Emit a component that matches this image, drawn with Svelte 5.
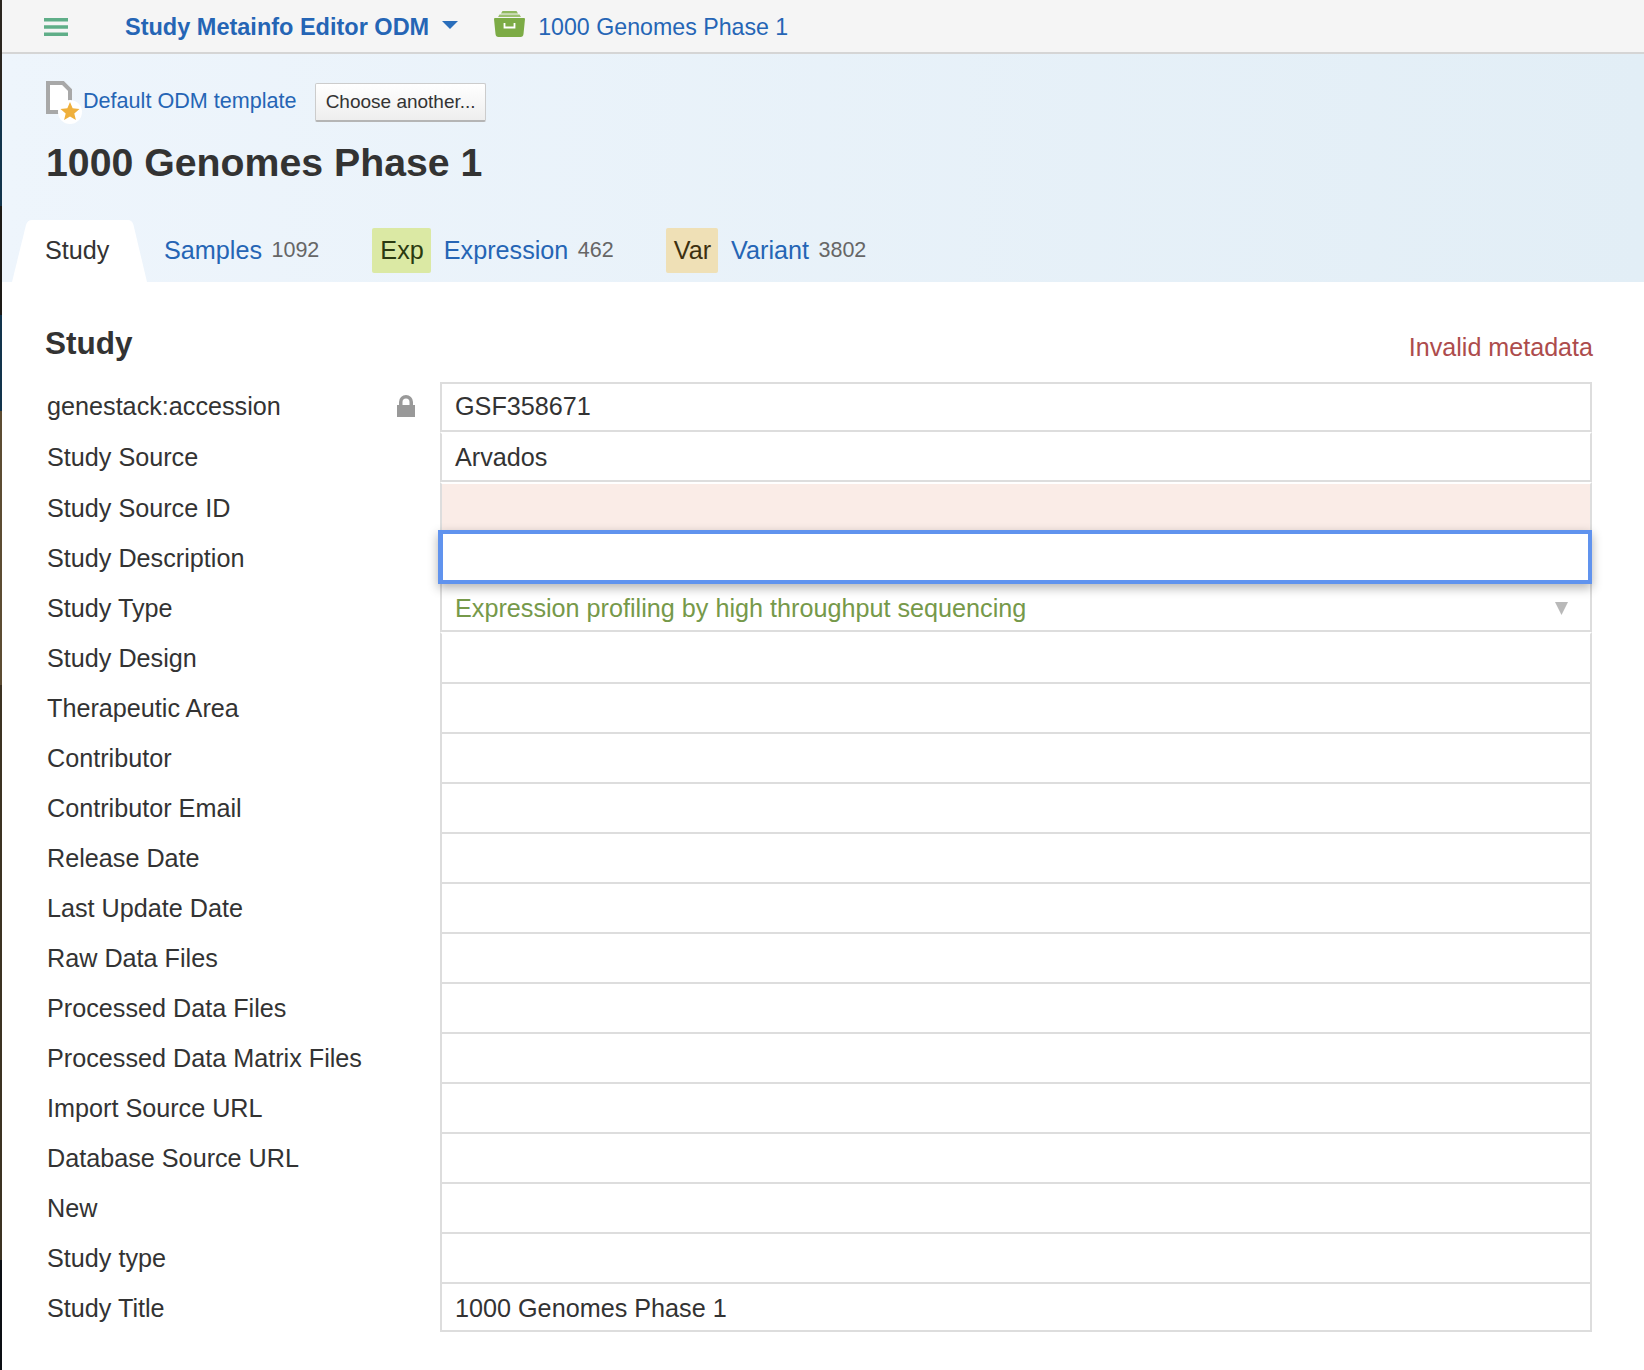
<script lang="ts">
	const fields = [
		{ label: 'genestack:accession', value: 'GSF358671', locked: true },
		{ label: 'Study Source', value: 'Arvados' },
		{ label: 'Study Source ID', value: '', invalid: true },
		{ label: 'Study Description', value: '', focused: true },
		{ label: 'Study Type', value: 'Expression profiling by high throughput sequencing', term: true },
		{ label: 'Study Design', value: '' },
		{ label: 'Therapeutic Area', value: '' },
		{ label: 'Contributor', value: '' },
		{ label: 'Contributor Email', value: '' },
		{ label: 'Release Date', value: '' },
		{ label: 'Last Update Date', value: '' },
		{ label: 'Raw Data Files', value: '' },
		{ label: 'Processed Data Files', value: '' },
		{ label: 'Processed Data Matrix Files', value: '' },
		{ label: 'Import Source URL', value: '' },
		{ label: 'Database Source URL', value: '' },
		{ label: 'New', value: '' },
		{ label: 'Study type', value: '' },
		{ label: 'Study Title', value: '1000 Genomes Phase 1' }
	];
</script>

<div class="page">
	<nav class="topbar">
		<svg class="burger" width="24" height="18" viewBox="0 0 24 18" aria-hidden="true">
			<path d="M0 1.750h24M0 9h24M0 16.250h24" stroke="#5fae88" stroke-width="3.500" />
		</svg>
		<a class="app-name" href="#app">Study Metainfo Editor ODM</a>
		<svg class="caret" width="16" height="8" viewBox="0 0 16 8" aria-hidden="true">
			<path d="M0 0h16L8 8z" fill="#2a6ebb" />
		</svg>
		<svg class="box" width="31" height="26" viewBox="0 0 31 26" aria-hidden="true">
			<path d="M7 2.500 8.500 0h14L24 2.500z" fill="#8fb85f" />
			<path d="M4 6 5.500 3.500h20L27 6z" fill="#9cc070" />
			<path d="M0 8q0-1 1-1h29q1 0 1 1l-1.500 15q-.3 3-3 3h-22q-2.700 0-3-3z" fill="#7cab45" />
			<path d="M10.500 12v4.500h10V12" fill="none" stroke="#fff" stroke-width="1.800" />
		</svg>
		<a class="file-name" href="#app">1000 Genomes Phase 1</a>
	</nav>

	<header class="head">
		<div class="template">
			<svg class="doc" width="36" height="44" viewBox="0 0 36 44" aria-hidden="true">
				<path d="M2 2h15l7 7v22H2z" fill="#fff" stroke="#a8a8a8" stroke-width="4" />
				<circle cx="24" cy="31" r="12" fill="#fff" />
				<path d="M24 21l2.650 6.360 6.850.54-5.200 4.500 1.600 6.700-5.900-3.600-5.900 3.600 1.600-6.700-5.200-4.500 6.850-.54z" fill="#efb03c" />
			</svg>
			<a class="template-link" href="#app">Default ODM template</a>
			<button class="choose" type="button">Choose another...</button>
		</div>
		<h1>1000 Genomes Phase 1</h1>
		<div class="tabs">
			<div class="tab active">Study</div>
			<div class="tab"><a href="#app">Samples</a><span class="count">1092</span></div>
			<div class="tab"><span class="badge exp">Exp</span><a href="#app">Expression</a><span class="count">462</span></div>
			<div class="tab"><span class="badge var">Var</span><a href="#app">Variant</a><span class="count">3802</span></div>
		</div>
	</header>

	<main class="content">
		<div class="section-head">
			<h2>Study</h2>
			<span class="invalid-note">Invalid metadata</span>
		</div>
		<div class="rows">
			{#each fields as field}
				<div class="row">
					<div class="label">
						<span>{field.label}</span>
						{#if field.locked}
							<svg class="lock" width="18" height="22" viewBox="0 0 18 22" aria-hidden="true">
								<path d="M3.750 11V7a5.250 5.250 0 0 1 10.500 0v4" fill="none" stroke="#999" stroke-width="3.500" />
								<path d="M0 10h18v12H0z" fill="#999" />
							</svg>
						{/if}
					</div>
					<div class="cell" class:invalid={field.invalid} class:focused={field.focused} class:term={field.term}>
						{field.value}
						{#if field.term}
							<svg class="arrow" width="13" height="13" viewBox="0 0 13 13" aria-hidden="true">
								<path d="M0 0h13L6.500 13z" fill="#b9b9b9" />
							</svg>
						{/if}
					</div>
				</div>
			{/each}
		</div>
	</main>
</div>

<style>
	:global(body) {
		margin: 0;
		background: #fff;
	}

	.page {
		min-height: 1370px;
		padding-left: 2px;
		/* sliver of desktop showing at the window's left edge */
		background: linear-gradient(
				#2b2620 0 8%,
				#12344c 8% 15%,
				#1d1a16 15% 23%,
				#12344c 23% 30%,
				#5c4c32 30% 50%,
				#3c3222 50% 92%,
				#0c0f14 92%
			)
			no-repeat 0 0 / 2px 100%;
		font-family: 'Liberation Sans', Arial, sans-serif;
		color: #333;
	}

	a {
		color: #2565b5;
		text-decoration: none;
	}

	.topbar {
		display: flex;
		align-items: center;
		height: 54px;
		box-sizing: border-box;
		padding: 2px 0 0 42px;
		background: #f5f5f5;
		border-bottom: 2px solid #d5d5d5;
	}

	.burger {
		margin-right: 57px;
	}

	.app-name {
		font-size: 23.500px;
		font-weight: 700;
	}

	.caret {
		margin: 0 36px 4px 13px;
	}

	.box {
		margin: 0 13px 6px 0;
	}

	.file-name {
		font-size: 23.200px;
	}

	.head {
		height: 228px;
		box-sizing: border-box;
		padding: 28px 0 0 44px;
		background: linear-gradient(90deg, #eef5fc, #e2eef6);
	}

	.template {
		display: flex;
		align-items: center;
		height: 40px;
	}

	.doc {
		margin: 2px 1px 0 0;
	}

	.template-link {
		padding-bottom: 2px;
		font-size: 21.600px;
	}

	.choose {
		height: 39px;
		margin-left: 18px;
		padding: 0 9.500px 0 10px;
		border: 1px solid #ccc;
		border-bottom: 2px solid #b5b5b5;
		border-radius: 2px;
		background: linear-gradient(#fff, #eee);
		font: 19px 'Liberation Sans', Arial, sans-serif;
		color: #333;
	}

	h1 {
		margin: 16px 0 0;
		font-size: 39.250px;
		line-height: 48px;
		font-weight: 700;
	}

	.tabs {
		display: flex;
		align-items: center;
		height: 62px;
		margin: 34px 0 0 -34px;
		font-size: 25.200px;
	}

	.tab {
		display: flex;
		align-items: center;
		height: 48px;
		margin: 0 53px 2px 0;
	}

	.tab.active {
		width: 135px;
		height: 62px;
		align-self: flex-end;
		box-sizing: border-box;
		padding: 0 0 2px 33px;
		margin: 0 17px 0 0;
		background: #fff;
		clip-path: path('M0 62 L14 5 Q15.500 0 20 0 L116 0 Q120 0 121.500 5 L135 62 Z');
	}

	.tab:nth-child(3) {
		margin-right: 52px;
	}

	.badge {
		display: flex;
		align-items: center;
		height: 45px;
		padding: 0 7px 0 8px;
		margin-right: 13px;
		border-radius: 2px;
	}

	.exp {
		background: #dbe9a4;
		color: #2a3a10;
	}

	.var {
		background: #efe0b6;
		color: #3d3010;
	}

	.count {
		margin-left: 9.500px;
		font-size: 21.500px;
		color: #666;
	}

	.content {
		padding: 40px 52px 0 44px;
	}

	.section-head {
		display: flex;
		justify-content: space-between;
		align-items: center;
		height: 42px;
		margin-bottom: 18px;
	}

	h2 {
		margin: 0 0 0 -1px;
		font-size: 31.500px;
		font-weight: 700;
	}

	.invalid-note {
		padding-top: 9px;
		margin-right: -1px;
		font-size: 25.100px;
		color: #ad4c4c;
	}

	.row {
		display: flex;
		height: 50px;
	}

	/* the reference's rows aren't perfectly even */
	.row:nth-child(6) {
		height: 52px;
	}

	.row:last-child {
		height: 48px;
	}

	.label {
		display: flex;
		align-items: center;
		justify-content: space-between;
		box-sizing: border-box;
		width: 369px;
		padding-left: 1px;
		margin-right: 25px;
		font-size: 25.200px;
	}

	.cell {
		position: relative;
		flex: 1;
		display: flex;
		align-items: center;
		justify-content: space-between;
		box-sizing: border-box;
		padding: 0 22px 0 13px;
		border: 2px solid #ddd;
		border-top-color: #fff;
		font-size: 25.200px;
	}

	.row:first-child .label,
	.row:first-child .cell,
	.row:nth-child(n + 7):not(:last-child) .label,
	.row:nth-child(n + 7):not(:last-child) .cell {
		padding-bottom: 2px;
	}

	.row:nth-child(n + 3):nth-child(-n + 5) .label,
	.row:nth-child(n + 3):nth-child(-n + 5) .cell {
		padding-top: 2px;
	}

	.row:first-child .cell {
		border-top-color: #ddd;
	}

	.row:nth-child(n + 7) .cell {
		border-top: 0;
		padding-top: 2px;
	}

	.cell.invalid {
		background: #faece7;
	}

	.cell.focused {
		margin: -2px 0 0 -2px;
		height: 54px;
		border: 4px solid #6093ee;
		border-left-width: 5px;
		background: #fff;
		box-shadow: 0 4px 10px rgba(0, 0, 0, 0.3);
		z-index: 1;
	}

	.cell.term {
		color: #76994a;
	}
</style>
